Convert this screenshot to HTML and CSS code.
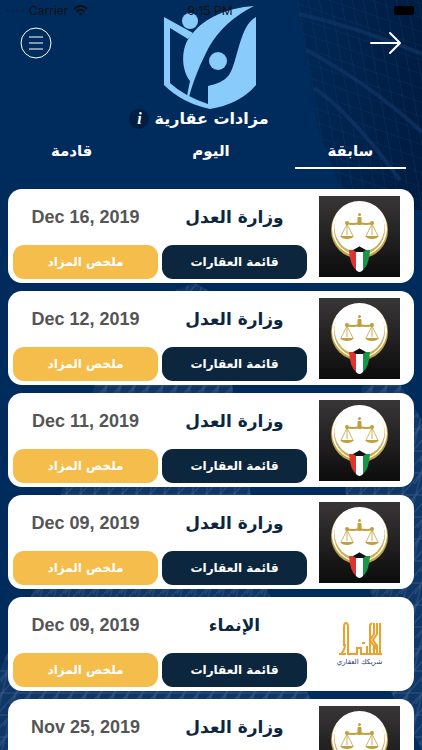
FILE: index.html
```html
<!DOCTYPE html>
<html lang="ar" dir="rtl">
<head>
  <meta charset="UTF-8" />
  <meta name="viewport" content="width=device-width, initial-scale=1.0"/>
  <title>مزادات عقارية</title>
  <link rel="stylesheet" href="styles.css">
</head>
<body>
  <!-- towers behind the page -->
  <svg class="backdrop" viewBox="0 0 422 750" preserveAspectRatio="xMidYMin slice" aria-hidden="true">
    <defs>
      <pattern id="windows" width="11" height="15" patternUnits="userSpaceOnUse" patternTransform="skewX(10) skewY(20)">
        <path d="M0 0H11M0 0V15" stroke="#1b4170" stroke-width="1" fill="none"/>
      </pattern>
      <pattern id="beams" width="14" height="22" patternUnits="userSpaceOnUse" patternTransform="skewX(-14)">
        <path d="M0 22L14 0M3 22L9 8M0 11H14M7 0V22" stroke="#4a6793" stroke-width="1" fill="none"/>
      </pattern>
      <linearGradient id="shade" x1="0" y1="0" x2="1" y2="0">
        <stop offset="0" stop-color="#002855"/>
        <stop offset="1" stop-color="#001c42"/>
      </linearGradient>
      <linearGradient id="coal" x1="0" y1="0" x2="0" y2="1">
        <stop offset="0" stop-color="#383637"/>
        <stop offset="1" stop-color="#0d0c0d"/>
      </linearGradient>
    </defs>
    <path d="M297 0H422V210H350L318 130Z" fill="url(#shade)"/>
    <path d="M297 0H422V210H350L318 130Z" fill="url(#windows)" opacity=".5"/>
    <path d="M299 14Q360 28 422 54M306 50Q370 84 422 132M314 88Q350 112 400 180" stroke="#12386a" stroke-width="4" fill="none" opacity=".6"/>
    <g opacity=".7">
      <path d="M195 283L176 290L95 384L62 490L30 600L0 670V750H330L268 590L250 490L232 384L208 290Z" fill="#163c6c"/>
      <path d="M195 283L176 290L95 384L62 490L30 600L0 670V750H330L268 590L250 490L232 384L208 290Z" fill="url(#beams)"/>
      <path d="M400 384L362 386L345 490L370 590L390 690L422 750V420Z" fill="#163c6c"/>
      <path d="M400 384L362 386L345 490L370 590L390 690L422 750V420Z" fill="url(#beams)"/>
    </g>

    <!-- shared ministry emblem -->
    <symbol id="justice" viewBox="0 0 81 81">
      <rect width="81" height="81" fill="url(#coal)"/>
      <circle cx="40.500" cy="34" r="28.500" fill="#c2a544"/>
      <circle cx="40.500" cy="32.500" r="27.500" fill="#fff"/>
      <circle cx="40.500" cy="33.500" r="25.500" fill="#c9ad50"/>
      <circle cx="40.500" cy="31.500" r="25" fill="#fff"/>
      <g fill="none" stroke="#bfa03c">
        <path d="M27 27Q34 29 40.500 27Q47 29 54 27" stroke-width="2"/>
        <path d="M28 28L22 40M28 28L34 40M28 28V39M53 28L47 40M53 28L59 40M53 28V39" stroke-width=".8"/>
      </g>
      <g fill="#bfa03c">
        <path d="M21 40H35Q33 43 28 43Q23 43 21 40ZM46 40H60Q58 43 53 43Q48 43 46 40Z"/>
        <rect x="38.500" y="21" width="4" height="8" rx="1"/>
        <circle cx="40.500" cy="18.500" r="1.500"/>
        <circle cx="28" cy="27" r="2"/>
        <circle cx="53" cy="27" r="2"/>
      </g>
      <path d="M34 56L40.500 50.500L47 56Z" fill="#111"/>
      <path d="M30 54Q34 54 37 54V74Q31 69 30 54Z" fill="#dc3530"/>
      <path d="M51 54Q48 54 44 54V74Q50 69 51 54Z" fill="#179548"/>
      <path d="M37 56L40.500 54L44 56V74Q40.500 78 37 74Z" fill="#fff"/>
      <path d="M34 54L40.500 50.500L47 54L44 56H37Z" fill="#111"/>
    </symbol>
  </svg>

  <div class="status" dir="ltr">
    <div class="carrier">
      <span class="dots"><i></i><i></i><i></i><i></i></span>
      <span>Carrier</span>
      <svg width="15" height="11" viewBox="0 0 15 11" fill="none" stroke="#111" stroke-width="2">
        <path d="M1 4Q7.500 -2 14 4M3.500 6.500Q7.500 3 11.500 6.500"/>
        <path d="M5.500 8.500Q7.500 7 9.500 8.500L7.500 11Z" fill="#111" stroke="none"/>
      </svg>
    </div>
    <div>9:15 PM</div>
    <div class="battery"></div>
  </div>

  <header class="top">
    <button class="icon-btn" aria-label="رجوع">
      <svg width="32" height="32" viewBox="0 0 32 32" fill="none" stroke="#fff" stroke-width="2" stroke-linecap="round" stroke-linejoin="round">
        <path d="M1 16H30M20 6L30 16L20 26"/>
      </svg>
    </button>
    <svg class="logo" width="94" height="103" viewBox="0 0 94 103" fill="#89ccfb" aria-hidden="true">
      <path d="M0 11L29 27L24 33L6 22V77Q20 90 44 98V80Q59 77 65 69C74 56 75 20 92 11V79Q76 98 46 103Q18 97 0 79Z"/>
      <path d="M90 0C62 2 41 12 29 27C17 38 16 62 26 75L23 90L25 91C29 76 36 58 45 41Q60 15 90 0Z"/>
      <circle cx="26" cy="15" r="8"/>
      <circle cx="54" cy="55" r="9"/>
    </svg>
    <button class="icon-btn" aria-label="القائمة">
      <svg width="32" height="32" viewBox="0 0 32 32" fill="none" stroke="#fff" stroke-width="1">
        <circle cx="16" cy="16" r="15"/>
        <path d="M9 10H23M9 16H23M9 22H23"/>
      </svg>
    </button>
  </header>

  <div class="title">
    <h1>مزادات عقارية</h1>
    <button class="info" aria-label="معلومات">i</button>
  </div>

  <nav class="tabs">
    <a href="#past" class="active">سابقة</a>
    <a href="#today">اليوم</a>
    <a href="#next">قادمة</a>
  </nav>

  <main class="list">
    <article class="card">
      <svg class="thumb" role="img" aria-label="وزارة العدل"><use href="#justice"/></svg>
      <div class="info-grid">
        <h2>وزارة العدل</h2>
        <time dir="ltr">Dec 16, 2019</time>
        <button class="dark">قائمة العقارات</button>
        <button class="gold">ملخص المزاد</button>
      </div>
    </article>
    <article class="card">
      <svg class="thumb" role="img" aria-label="وزارة العدل"><use href="#justice"/></svg>
      <div class="info-grid">
        <h2>وزارة العدل</h2>
        <time dir="ltr">Dec 12, 2019</time>
        <button class="dark">قائمة العقارات</button>
        <button class="gold">ملخص المزاد</button>
      </div>
    </article>
    <article class="card">
      <svg class="thumb" role="img" aria-label="وزارة العدل"><use href="#justice"/></svg>
      <div class="info-grid">
        <h2>وزارة العدل</h2>
        <time dir="ltr">Dec 11, 2019</time>
        <button class="dark">قائمة العقارات</button>
        <button class="gold">ملخص المزاد</button>
      </div>
    </article>
    <article class="card">
      <svg class="thumb" role="img" aria-label="وزارة العدل"><use href="#justice"/></svg>
      <div class="info-grid">
        <h2>وزارة العدل</h2>
        <time dir="ltr">Dec 09, 2019</time>
        <button class="dark">قائمة العقارات</button>
        <button class="gold">ملخص المزاد</button>
      </div>
    </article>
    <article class="card">
      <div class="thumb inmaa">
        <svg width="44" height="34" viewBox="0 0 44 34" fill="none" stroke="#e9a22b" stroke-width="2" aria-hidden="true">
          <path d="M6 24V5Q6 1 8 1Q10 1 10 5V32H19V26H23V32H29V24M1 32H8M3 32Q7 28 7 22"/>
          <path d="M32 33V3L34 1M36 33V24L32 18L36 12V1M39 33V24L35 18L39 12V1M42 32V1M29 32H44"/>
          <path d="M24 21H27M35 22L39 28M39 22L35 28"/>
        </svg>
        <span>شريكك العقاري</span>
      </div>
      <div class="info-grid">
        <h2>الإنماء</h2>
        <time dir="ltr">Dec 09, 2019</time>
        <button class="dark">قائمة العقارات</button>
        <button class="gold">ملخص المزاد</button>
      </div>
    </article>
    <article class="card">
      <svg class="thumb" role="img" aria-label="وزارة العدل"><use href="#justice"/></svg>
      <div class="info-grid">
        <h2>وزارة العدل</h2>
        <time dir="ltr">Nov 25, 2019</time>
        <button class="dark">قائمة العقارات</button>
        <button class="gold">ملخص المزاد</button>
      </div>
    </article>
  </main>
</body>
</html>
```
FILE: styles.css
```css
* {
  box-sizing: border-box;
}

body {
  margin: 0;
  height: 100vh;
  display: flex;
  flex-direction: column;
  background: #002c5d;
  color: #fff;
  font-family: "DejaVu Sans", sans-serif;
  position: relative;
}

button {
  border: none;
  padding: 0;
  color: #fff;
  font-family: inherit;
  cursor: pointer;
}

h1, h2 {
  margin: 0;
}

.backdrop {
  position: absolute;
  top: 0;
  left: 0;
  width: 100%;
  height: 100%;
  z-index: -1;
}

/* phone status bar, lies over the logo */
.status {
  position: absolute;
  top: 0;
  left: 0;
  right: 0;
  height: 20px;
  padding: 0 8px 0 6px;
  display: grid;
  grid-template-columns: 1fr auto 1fr;
  align-items: center;
  color: #111;
  font: 12px "Inter", sans-serif;
  z-index: 1;
}

.carrier {
  display: flex;
  align-items: center;
  gap: 5px;
}

.dots {
  display: flex;
  gap: 2px;
}

.dots i {
  width: 3px;
  height: 3px;
  border-radius: 50%;
  background: #0a2348;
}

.battery {
  justify-self: end;
  width: 20px;
  height: 9px;
  border-radius: 2px;
  background: #000;
}

.top {
  display: flex;
  justify-content: space-between;
  align-items: flex-start;
  padding: 6px 20px 0;
}

.icon-btn {
  margin-top: 21px;
  width: 32px;
  height: 32px;
  background: none;
}

.icon-btn svg {
  display: block;
}

.title {
  display: flex;
  justify-content: center;
  align-items: center;
  gap: 5px;
  height: 20px;
  padding-right: 24px;
}

.title h1 {
  font-size: 16px;
  line-height: 20px;
}

.info {
  width: 20px;
  height: 20px;
  border-radius: 50%;
  background: #001d42;
  font: italic bold 16px "Liberation Serif", serif;
}

.tabs {
  display: grid;
  grid-template-columns: repeat(3, 1fr);
  padding: 0 2px;
  margin: 8px 0 20px;
}

.tabs a {
  justify-self: center;
  width: 80%;
  height: 32px;
  border-bottom: 2px solid transparent;
  color: #fff;
  font-size: 15px;
  font-weight: bold;
  line-height: 28px;
  text-align: center;
  text-decoration: none;
}

.tabs .active {
  border-color: #fff;
}

.list {
  flex: 1;
  min-height: 0;
  display: flex;
  flex-direction: column;
  gap: 8px;
  padding: 0 8px;
  overflow-y: auto;
  scrollbar-width: none;
}

.card {
  flex: none;
  display: flex;
  align-items: center;
  gap: 12px;
  height: 94px;
  padding: 0 14px 0 5px;
  border-radius: 14px;
  background: #fff;
}

.thumb {
  flex: none;
  width: 81px;
  height: 81px;
}

.inmaa {
  display: flex;
  flex-direction: column;
  align-items: center;
  justify-content: center;
  gap: 1px;
  color: #2c3580;
  font-size: 7px;
  line-height: 10px;
}

.info-grid {
  flex: 1;
  align-self: stretch;
  display: grid;
  grid-template-columns: 1fr 1fr;
  grid-template-rows: 1fr 34px;
  column-gap: 4px;
  padding-bottom: 4px;
  align-items: center;
  text-align: center;
}

.info-grid h2 {
  color: #0b263d;
  font-size: 17px;
  line-height: 24px;
}

.info-grid time {
  color: #555;
  font: bold 18px "Liberation Sans", sans-serif;
}

.info-grid button {
  height: 34px;
  border-radius: 11px;
  font-size: 12px;
  font-weight: bold;
}

.dark {
  background: #0b263d;
}

.gold {
  background: #f4bd4c;
}
```
